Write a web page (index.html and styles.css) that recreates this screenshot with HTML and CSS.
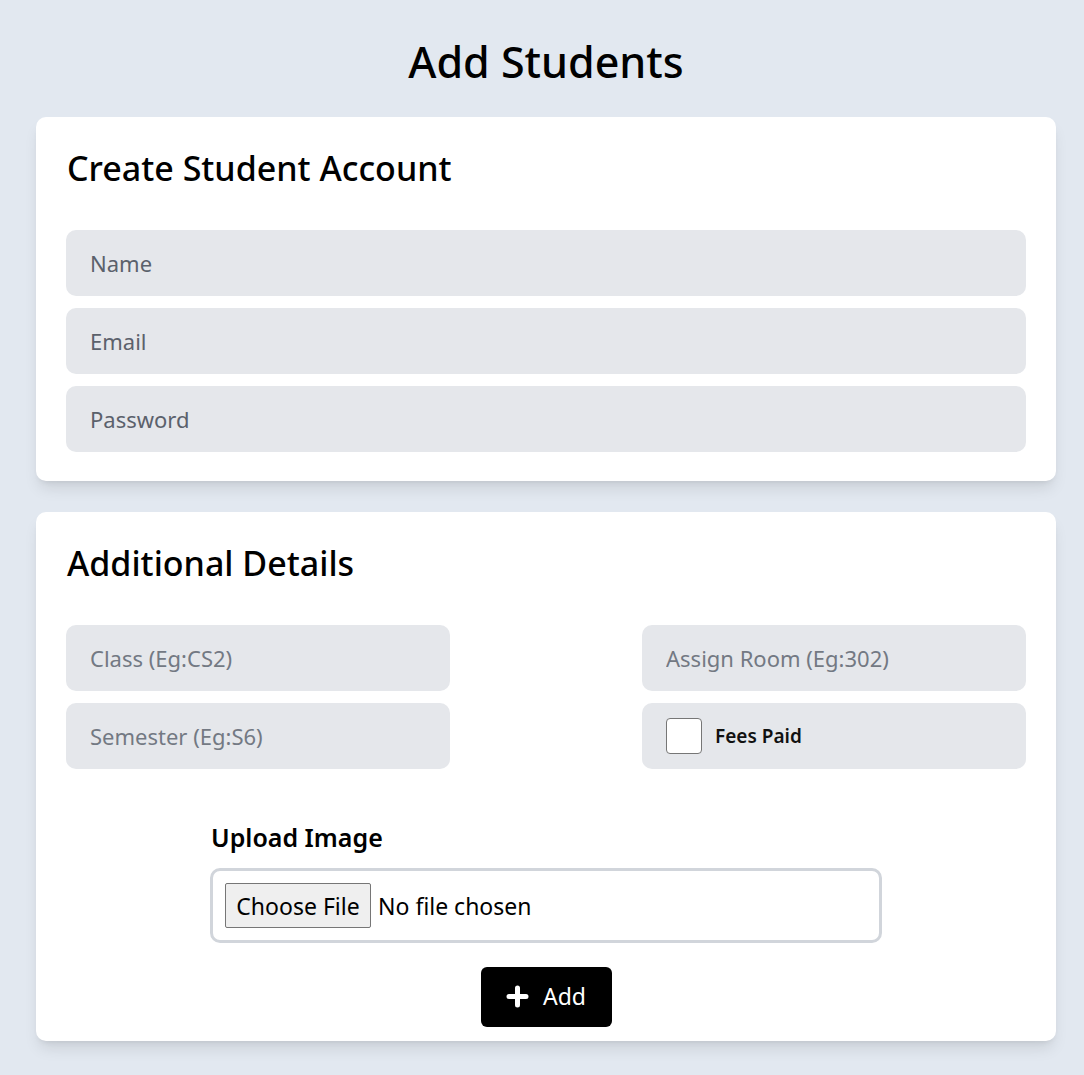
FILE: index.html
```html
<!DOCTYPE html>
<html>
<head>
<meta charset="utf-8">
<link rel="stylesheet" href="styles.css">
</head>
<body>
<main class="page">
  <h1 class="page-title">Add Students</h1>
  <section class="card">
    <h2 class="card-title">Create Student Account</h2>
    <div class="stack">
      <input class="field" type="text" placeholder="Name">
      <input class="field" type="email" placeholder="Email">
      <input class="field" type="password" placeholder="Password">
    </div>
  </section>
  <section class="card card-2">
    <h2 class="card-title">Additional Details</h2>
    <div class="grid">
      <div class="col">
        <input class="field" type="text" placeholder="Class (Eg:CS2)">
        <input class="field" type="text" placeholder="Semester (Eg:S6)">
      </div>
      <div class="col">
        <input class="field" type="text" placeholder="Assign Room (Eg:302)">
        <label class="field check-field"><input class="check" type="checkbox"><span>Fees Paid</span></label>
      </div>
    </div>
    <div class="upload">
      <div class="upload-label">Upload Image</div>
      <div class="file-box">
        <span class="file-btn">Choose File</span><span class="file-text">No file chosen</span>
      </div>
    </div>
    <div class="actions">
      <button class="add-btn" type="button">
        <svg width="23" height="23" viewBox="0 0 23 23"><path d="M11.5 3v17M3 11.5h17" stroke="#fff" stroke-width="5" stroke-linecap="round"/></svg>
        <span>Add</span>
      </button>
    </div>
  </section>
</main>
</body>
</html>
```
FILE: styles.css
```css
* { box-sizing: border-box; }
html, body { margin: 0; padding: 0; }
body {
  background: #e2e8f0;
  font-family: "Noto Sans", "Open Sans", sans-serif;
  color: #000;
}
.page {
  padding: 32px 28px 33px 36px;
  display: flex;
  flex-direction: column;
  gap: 31px;
}
.page-title {
  margin: 0 0 -6px 0;
  text-align: center;
  font-size: 43px;
  font-weight: 500;
  line-height: 60px;
  height: 60px;
}
.card {
  background: #fff;
  border-radius: 10px;
  box-shadow: 0 10px 15px -3px rgba(0,0,0,0.1), 0 4px 6px -4px rgba(0,0,0,0.1);
  padding: 28px 30px 29px 30px;
  width: 1020px;
}
.card-2 { padding-bottom: 14px; }
.card-title {
  margin: 0 0 39px 1px;
  font-size: 34px;
  font-weight: 500;
  line-height: 46px;
}
.stack {
  display: flex;
  flex-direction: column;
  gap: 12px;
}
.field {
  height: 66px;
  width: 100%;
  border: none;
  border-radius: 10px;
  background: #e5e7eb;
  padding: 0 24px;
  font-family: inherit;
  font-size: 22px;
  color: #111;
  outline: none;
}
.field::placeholder { color: #5b616b; }
.grid .field::placeholder { color: #737983; }
.grid {
  display: flex;
  justify-content: space-between;
}
.col {
  width: 384px;
  display: flex;
  flex-direction: column;
  gap: 12px;
}
.check-field {
  display: flex;
  align-items: center;
  gap: 13px;
  padding-left: 24px;
}
.check {
  appearance: none;
  margin: 0;
  width: 36px;
  height: 36px;
  border: 1px solid #767676;
  border-radius: 4px;
  background: #fff;
}
.check-field span {
  font-size: 19px;
  font-weight: 600;
  color: #111;
}
.upload {
  width: 672px;
  margin: 52px auto 0;
}
.upload-label {
  font-size: 25px;
  font-weight: 600;
  line-height: 32px;
  margin: 0 0 15px 1px;
}
.file-box {
  height: 75px;
  border: 3px solid #d1d5db;
  border-radius: 10px;
  display: flex;
  align-items: center;
  padding-left: 12px;
  gap: 7px;
}
.file-btn {
  height: 45px;
  width: 146px;
  justify-content: center;
  display: flex;
  align-items: center;
  border: 1px solid #767676;
  border-radius: 2px;
  background: #efefef;
  font-size: 23px;
}
.file-text { font-size: 23px; }
.actions {
  display: flex;
  justify-content: center;
  margin-top: 24px;
}
.add-btn {
  width: 131px;
  height: 60px;
  background: #000;
  color: #fff;
  border: none;
  border-radius: 6px;
  display: flex;
  align-items: center;
  justify-content: center;
  gap: 14px;
  font-family: inherit;
  font-size: 23px;
  padding: 0 0 2px 0;
}
```
